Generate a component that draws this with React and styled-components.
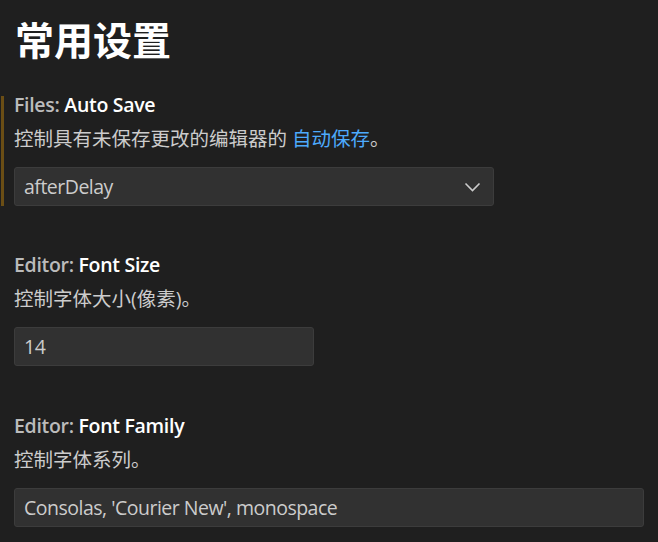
import React from 'react'
import styled, { createGlobalStyle } from 'styled-components'

const GlobalStyle = createGlobalStyle`
  html, body {
    margin: 0;
    padding: 0;
    background: #1f1f1f;
  }
  body {
    font-family: 'Open Sans', 'Noto Sans CJK SC', sans-serif;
  }
`

const Page = styled.div`
  width: 658px;
  height: 542px;
  overflow: hidden;
  background: #1f1f1f;
  color: #cccccc;
  font-size: 19.5px;
`

const Heading = styled.h1`
  margin: 0;
  padding: 16px 0 0 15px;
  height: 74px;
  box-sizing: border-box;
  font-size: 39px;
  line-height: 48px;
  font-weight: 700;
  color: #ffffff;
`

const Item = styled.section`
  position: relative;
  padding: 16px 0 0 14px;
  height: ${p => p.height}px;
  box-sizing: border-box;

  &::before {
    content: '';
    display: ${p => (p.modified ? 'block' : 'none')};
    position: absolute;
    left: 1px;
    top: 22px;
    bottom: 28px;
    width: 3px;
    background: #6b4e15;
  }
`

const Title = styled.div`
  line-height: 29px;
  font-weight: 600;
  color: #ffffff;
  letter-spacing: -0.3px;
`

const Category = styled.span`
  color: #bbbbbb;
`

const Description = styled.div`
  margin-top: 5px;
  line-height: 29px;
  color: #cccccc;
`

const Link = styled.a`
  color: #4daafc;
  text-decoration: none;
`

const Field = styled.div`
  margin-top: 14px;
  width: ${p => p.width}px;
  height: 39px;
  box-sizing: border-box;
  background: #313131;
  border: 1px solid #3c3c3c;
  border-radius: 3px;
  display: flex;
  align-items: center;
  justify-content: space-between;
  padding: 0 12px 0 9px;
  color: #cccccc;
  letter-spacing: -0.5px;
`

const Chevron = () => (
  <svg width="17" height="10" viewBox="0 0 17 10" fill="none">
    <path d="M1.5 1.5 L8.5 8.5 L15.5 1.5" stroke="#cccccc" strokeWidth="1.6" />
  </svg>
)

export default function App() {
  return (
    <Page>
      <GlobalStyle />
      <Heading>常用设置</Heading>
      <Item modified height={160}>
        <Title>
          <Category>Files: </Category>Auto Save
        </Title>
        <Description>
          控制具有未保存更改的编辑器的 <Link>自动保存</Link>。
        </Description>
        <Field width={480}>
          <span>afterDelay</span>
          <Chevron />
        </Field>
      </Item>
      <Item height={161}>
        <Title>
          <Category>Editor: </Category>Font Size
        </Title>
        <Description>控制字体大小(像素)。</Description>
        <Field width={300}>14</Field>
      </Item>
      <Item height={161}>
        <Title>
          <Category>Editor: </Category>Font Family
        </Title>
        <Description>控制字体系列。</Description>
        <Field width={630}>Consolas, 'Courier New', monospace</Field>
      </Item>
    </Page>
  )
}
